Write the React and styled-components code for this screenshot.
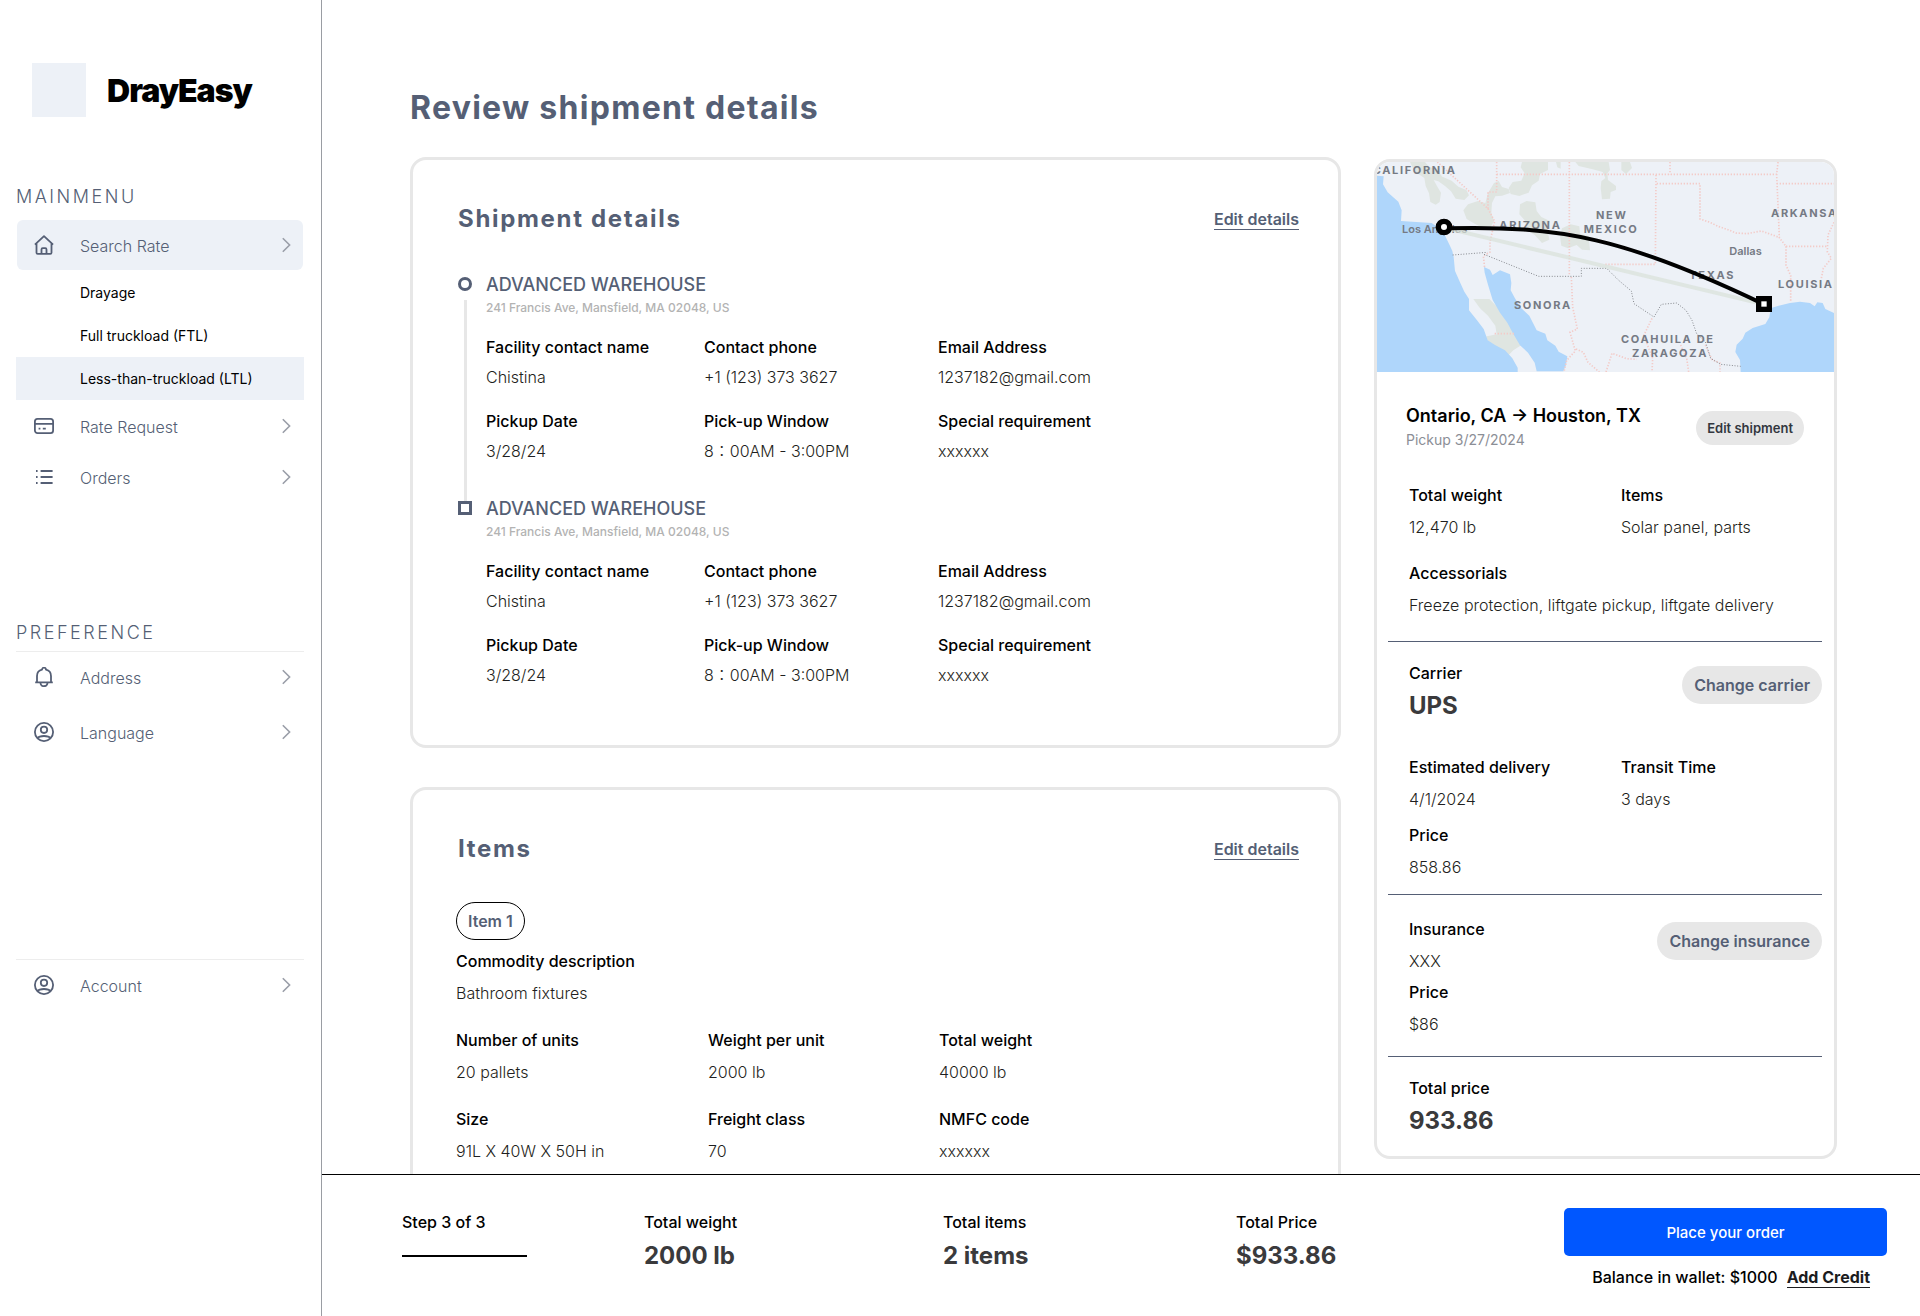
// Review shipment page

import React from 'react';
import styled, { createGlobalStyle } from 'styled-components';

const GlobalStyle = createGlobalStyle`
    *{
        box-sizing : border-box;
    }
    body{
        margin : 0;
        background : #ffffff;
        color : #000000;
        font-family : Inter, "Noto Sans CJK JP", sans-serif;
        font-size : 16px;
        line-height : 20px;
    }
    h1, h2, h3, p, dl, dd, ul{
        margin : 0;
        padding : 0;
    }
    button{
        font-family : inherit;
        border : none;
        padding : 0;
        cursor : pointer;
    }
`;

// page frame
const PageStyle = styled.div`
    display : grid;
    grid-template-columns : 322px minmax(0, 1fr);
    height : 100vh;
`;

// sidebar
const SidebarStyle = styled.nav`
    border-right : 1px solid #9a9da3;
    padding : 63px 17px 0 16px;
    overflow : hidden;
`;

const BrandStyle = styled.div`
    display : flex;
    align-items : center;
    gap : 21px;
    padding-left : 16px;
    margin-bottom : 68px;
`;

const LogoStyle = styled.div`
    width : 54px;
    height : 54px;
    background : #edf1f7;
`;

const BrandName = styled.span`
    font-size : 32px;
    font-weight : 900;
    line-height : 40px;
    letter-spacing : -1px;
    padding-top : 2px;
`;

const MenuTitle = styled.h2`
    font-size : 18px;
    font-weight : 300;
    line-height : 24px;
    letter-spacing : 0.14em;
    color : #555f75;
    margin-bottom : ${props => props.$gap}px;
`;

const MenuList = styled.ul`
    list-style : none;
    display : flex;
    flex-direction : column;
    gap : ${props => props.$gap}px;
    margin-bottom : ${props => props.$after}px;
    border-top : ${props => (props.$line ? '1px solid #ededed' : 'none')};
`;

const MenuLink = styled.a`
    display : grid;
    grid-template-columns : 20px 1fr 20px;
    align-items : center;
    column-gap : 26px;
    height : 50px;
    margin : 0 1px;
    padding : 0 7px 0 17px;
    border-radius : 6px;
    background : ${props => (props.$active ? '#edf1f7' : 'transparent')};
    color : #555f75;
    font-weight : 300;
    text-decoration : none;
    svg{
        display : block;
    }
    span{
        padding-top : 2px;
    }
`;

const SubLink = styled.a`
    display : flex;
    align-items : center;
    height : 43px;
    padding-left : 64px;
    font-size : 14px;
    color : #000000;
    background : ${props => (props.$active ? '#edf1f7' : 'transparent')};
    text-decoration : none;
`;

// main column
const MainStyle = styled.main`
    display : flex;
    flex-direction : column;
    min-height : 0;
`;

const ScrollArea = styled.div`
    flex : 1;
    min-height : 0;
    overflow-y : auto;
    scrollbar-width : none;
    padding : 88px 83px 39px 88px;
`;

const PageTitle = styled.h1`
    font-size : 32px;
    font-weight : 700;
    line-height : 40px;
    letter-spacing : 0.04em;
    color : #555f75;
    margin-bottom : 29px;
`;

const ColumnsStyle = styled.div`
    display : grid;
    grid-template-columns : 931fr 463fr;
    column-gap : 33px;
    align-items : start;
`;

const CardStack = styled.div`
    display : flex;
    flex-direction : column;
    gap : 39px;
`;

const CardStyle = styled.section`
    border : 3px solid #e7e7e7;
    border-radius : 16px;
    padding : 43px 39px 60px 43px;
`;

const CardHead = styled.div`
    display : flex;
    justify-content : space-between;
    align-items : center;
    padding-left : 2px;
    margin-bottom : 37px;
`;

const CardTitle = styled.h2`
    font-size : 24px;
    font-weight : 700;
    line-height : 32px;
    letter-spacing : 0.07em;
    color : #555f75;
`;

const TextLink = styled.a`
    font-weight : ${props => props.$weight};
    color : ${props => props.$color};
    text-decoration : none;
    border-bottom : 1px solid ${props => props.$color};
`;

// stops
const StopList = styled.div`
    padding : 2px 0 0 2px;
`;

const StopStyle = styled.div`
    display : grid;
    grid-template-columns : 14px 1fr;
    column-gap : 14px;
`;

const RailStyle = styled.div`
    display : flex;
    flex-direction : column;
    padding-top : 3px;
`;

const MarkerStyle = styled.span`
    width : 14px;
    height : 14px;
    flex : none;
    border : 3px solid #555f75;
    border-radius : ${props => (props.$round ? '50%' : '0')};
`;

const RailLine = styled.span`
    flex : 1;
    width : 3px;
    margin : 9px 0 -3px 6px;
    background : #e7e7e7;
`;

const StopBody = styled.div`
    padding-bottom : ${props => (props.$last ? 0 : 37)}px;
`;

const StopName = styled.h3`
    font-size : 18px;
    font-weight : 500;
    line-height : 22px;
    color : #555f75;
`;

const StopAddress = styled.p`
    font-size : 12px;
    font-weight : 500;
    line-height : 16px;
    color : #b3b3b3;
    margin : 4px 0 21px;
`;

// label and value pairs
const FieldGrid = styled.dl`
    display : grid;
    grid-template-columns : ${props => props.$columns};
    row-gap : ${props => props.$rowGap}px;
`;

const FieldStyle = styled.div`
    display : flex;
    flex-direction : column;
    gap : ${props => props.$gap}px;
    grid-column : ${props => (props.$wide ? '1 / -1' : 'auto')};
`;

const Label = styled.dt`
    font-weight : 500;
`;

const Value = styled.dd`
    color : #1f1f21;
    font-weight : 300;
`;

const BigValue = styled.dd`
    font-size : 24px;
    font-weight : 700;
    line-height : 28px;
    color : #3a3a3c;
`;

const ItemTag = styled.button`
    display : block;
    height : 38px;
    padding : 0 11px;
    border : 1px solid #000000;
    border-radius : 19px;
    background : #ffffff;
    color : #555f75;
    font-size : 16px;
    font-weight : 600;
    margin-bottom : 11px;
`;

// summary card
const SummaryStyle = styled.aside`
    margin-top : 2px;
    border : 3px solid #e7e7e7;
    border-radius : 16px;
    overflow : hidden;
`;

const MapStyle = styled.svg`
    display : block;
    width : 100%;
    height : 210px;
    font-weight : 600;
    font-size : 33px;
    fill : #757a84;
`;

const RouteHead = styled.div`
    display : flex;
    justify-content : space-between;
    align-items : center;
    padding : 33px 30px 35px 29px;
`;

const RouteTitle = styled.h2`
    font-size : 18px;
    font-weight : 600;
    line-height : 22px;
`;

const RouteDate = styled.p`
    font-size : 14px;
    color : #8b8e96;
    margin-top : 3px;
`;

const SummarySection = styled.div`
    margin : 0 12px 0 11px;
    padding : ${props => props.$pad} 0 ${props => props.$end} 21px;
    border-top : ${props => (props.$first ? 'none' : '1px solid #555f75')};
`;

const SectionHead = styled.div`
    display : flex;
    justify-content : space-between;
    align-items : flex-start;
    margin-bottom : ${props => props.$after}px;
`;

const PillButton = styled.button`
    height : ${props => (props.$small ? 34 : 38)}px;
    padding : 0 ${props => (props.$small ? 11 : 12)}px;
    margin-top : ${props => (props.$small ? 0 : 3)}px;
    border-radius : 19px;
    background : #e7e7e7;
    color : ${props => (props.$small ? '#33373f' : '#555f75')};
    font-size : ${props => (props.$small ? 13 : 16)}px;
    font-weight : 600;
`;

// bottom bar
const BottomBar = styled.footer`
    display : grid;
    grid-template-columns : 242fr 299fr 293fr 328fr 323fr;
    border-top : 1px solid #000000;
    padding : 33px 33px 28px 80px;
    background : #ffffff;
`;

const Metric = styled.dl`
    display : flex;
    flex-direction : column;
    gap : 10px;
    padding-top : 4px;
`;

const StepStyle = styled.div`
    padding-top : 4px;
    font-weight : 500;
`;

const StepBar = styled.div`
    width : 125px;
    height : 2px;
    margin-top : 23px;
    background : #000000;
`;

const OrderButton = styled.button`
    width : 100%;
    height : 48px;
    border-radius : 5px;
    background : #0057ff;
    color : #ffffff;
    font-size : 15px;
    font-weight : 500;
`;

const BalanceRow = styled.div`
    display : flex;
    justify-content : flex-end;
    gap : 9px;
    margin-top : 11px;
    padding-right : 17px;
    font-weight : 500;
`;

const icons = {
    home: (
        <>
            <path d="M0.9 9.6 10 1.2l9.1 8.4" />
            <path d="M2.5 8.4v9.3a1.2 1.2 0 0 0 1.2 1.2h12.6a1.2 1.2 0 0 0 1.2-1.2V8.4" />
            <path d="M7.5 18.8v-4.4a1.2 1.2 0 0 1 1.2-1.2h2.6a1.2 1.2 0 0 1 1.2 1.2v4.4" />
        </>
    ),
    card: (
        <>
            <rect x="0.9" y="2.9" width="18.2" height="14.2" rx="2.6" />
            <path d="M0.9 7.8h18.2M4.6 12.6h1.8M8.8 12.6h3" />
        </>
    ),
    list: <path d="M2 4h1.6M2 10h1.6M2 16h1.6M6.6 4h12M6.6 10h12M6.6 16h12" />,
    bell: (
        <>
            <path d="M1.2 15.4h17.6M3 15.2V9c0-3 2-5.6 5-6.3a2 2 0 0 1 4 0c3 .7 5 3.3 5 6.3v6.2" />
            <path d="M6.5 16a3.5 3.2 0 0 0 7 0" />
        </>
    ),
    user: (
        <>
            <circle cx="10" cy="10" r="9.1" />
            <circle cx="10" cy="7.8" r="3.2" />
            <path d="M3.4 16.2c1.2-1.6 3.6-2.2 6.6-2.2s5.4 .6 6.6 2.2" />
        </>
    )
};

function Icon({ name }) {
    return (
        <svg width="20" height="20" viewBox="0 0 20 20" fill="none" stroke="#555f75" strokeWidth="1.8" strokeLinejoin="round" aria-hidden="true">
            {icons[name]}
        </svg>
    );
}

function Chevron() {
    return (
        <svg width="20" height="20" viewBox="0 0 20 20" fill="none" stroke="#9a9ea8" strokeWidth="1.6" aria-hidden="true">
            <path d="M6.8 3.2 13.6 10l-6.8 6.8" />
        </svg>
    );
}

function MenuItem({ icon, text, active }) {
    return (
        <li>
            <MenuLink href="#" $active={active}>
                <Icon name={icon} />
                <span>{text}</span>
                <Chevron />
            </MenuLink>
        </li>
    );
}

function Sidebar() {
    return (
        <SidebarStyle>
            <BrandStyle>
                <LogoStyle />
                <BrandName>DrayEasy</BrandName>
            </BrandStyle>
            <MenuTitle $gap={11}>MAINMENU</MenuTitle>
            <MenuList $gap={1} $after={119}>
                <MenuItem icon="home" text="Search Rate" active />
                <li>
                    <SubLink href="#">Drayage</SubLink>
                    <SubLink href="#">Full truckload (FTL)</SubLink>
                    <SubLink href="#" $active>Less-than-truckload (LTL)</SubLink>
                </li>
                <MenuItem icon="card" text="Rate Request" />
                <MenuItem icon="list" text="Orders" />
            </MenuList>
            <MenuTitle $gap={6}>PREFERENCE</MenuTitle>
            <MenuList $gap={5} $after={202} $line>
                <MenuItem icon="bell" text="Address" />
                <MenuItem icon="user" text="Language" />
            </MenuList>
            <MenuList $gap={5} $after={0} $line>
                <MenuItem icon="user" text="Account" />
            </MenuList>
        </SidebarStyle>
    );
}

function Field({ label, value, gap = 12, wide }) {
    return (
        <FieldStyle $gap={gap} $wide={wide}>
            <Label>{label}</Label>
            <Value>{value}</Value>
        </FieldStyle>
    );
}

function Total({ label, value }) {
    return (
        <FieldStyle as="dl" $gap={9}>
            <Label>{label}</Label>
            <BigValue>{value}</BigValue>
        </FieldStyle>
    );
}

const stopFields = [
    { label: 'Facility contact name', value: 'Chistina' },
    { label: 'Contact phone', value: '+1 (123) 373 3627' },
    { label: 'Email Address', value: '1237182@gmail.com' },
    { label: 'Pickup Date', value: '3/28/24' },
    { label: 'Pick-up Window', value: '8：00AM - 3:00PM' },
    { label: 'Special requirement', value: 'xxxxxx' }
];

const itemFields = [
    { label: 'Commodity description', value: 'Bathroom fixtures', wide: true },
    { label: 'Number of units', value: '20 pallets' },
    { label: 'Weight per unit', value: '2000 lb' },
    { label: 'Total weight', value: '40000 lb' },
    { label: 'Size', value: '91L X 40W X 50H in' },
    { label: 'Freight class', value: '70' },
    { label: 'NMFC code', value: 'xxxxxx' }
];

function Stop({ last }) {
    return (
        <StopStyle>
            <RailStyle>
                <MarkerStyle $round={!last} />
                {!last && <RailLine />}
            </RailStyle>
            <StopBody $last={last}>
                <StopName>ADVANCED WAREHOUSE</StopName>
                <StopAddress>241 Francis Ave, Mansfield, MA 02048, US</StopAddress>
                <FieldGrid $columns="218fr 234fr 361fr" $rowGap={24}>
                    {stopFields.map(field => (
                        <Field key={field.label} gap={10} {...field} />
                    ))}
                </FieldGrid>
            </StopBody>
        </StopStyle>
    );
}

function Card({ title, children }) {
    return (
        <CardStyle>
            <CardHead>
                <CardTitle>{title}</CardTitle>
                <TextLink href="#" $color="#555f75" $weight={600}>Edit details</TextLink>
            </CardHead>
            {children}
        </CardStyle>
    );
}

// route map, Los Angeles to Houston
function RouteMap() {
    return (
        <MapStyle viewBox="51 51 1371 630" preserveAspectRatio="xMidYMid slice" role="img" aria-label="Route map">
            <rect x="0" y="0" width="1480" height="720" fill="#edf1f7" />
            {/* parks */}
            <g fill="#dfe5e1">
                <path d="M150 51h45l12 14 22 8 18 22 28 12 20 18 24 10 8 16-14 14-26-4-14-22-18-16-20-14-14-4 12 22 10 16-4 28-12 8-16-8-4-26-10-22-4-24-30-20z" />
                <path d="M310 196l14-18 30-10 22 6 8-30 18-30 14-6 10 18 20 6 4 12-24 8-20 2-10 20-2 30 8 24-10 18-24 2-24-12-24-14z" />
                <path d="M486 51h78v24l-24 12-4 20-20 14-10 22-28 10-26-6-6-18 12-18 26-4 10-22-12-18z" />
                <path d="M588 51h14v20l-10-4z" />
                <path d="M480 178l20-10 26 4 4 26 14 18 26 12-8 24 6 32-22 10-22-24-22-14-8-30-16-18z" />
                <path d="M606 250l26-12 26 6 2 22 26 8 4 42-24-2-16-14-26 10-20-8-4-28z" />
                <path d="M646 51h100l4 24-8 10 2 20 24 18 0 12-16 6-2 20-24 2-4-34 2-20 12-10-8-18-30-8-42-10z" />
                <path d="M784 51h26l6 18-18 18-14-12z" />
                <path d="M340 462h48l26 26 26 16 10 30 14 10 6 26 18 28-28 18-14 14-30-10-16-18-30-26 40-8-4-26-22-30-24-22z" />
            </g>
            {/* water */}
            <g fill="#afd6fb">
                <path d="M51 92l20 2-2 24 14 24 32 28 10 26-2 32 34 2 58 4 22 16 16 18 14 28 10 22 4 18 4 42 16 36 12 26 14 22 0 34 24 30 20 26 12 34 22 14 30 16 22 24 16 28v21H51z" />
                <path d="M372 366l18 8 8 16 22-14 30 12 4 26-2 22 12 22 18 30 26 24 22 44 26 10 6 20 24 16 10 18 26 14-4 26-8 19H530l-6-26-20-30-24-22-20-34-18-34-22-30-22-38-14-46-10-36z" />
                <path d="M1236 488l20-6 34-8 30-4 30 4 14 10 8-12 16 2 8 18 26 12v177h-280l-2-36-14-24 4-22 18-18 8-18 22-14 38-12 12-20 2-14z" />
            </g>
            {/* state borders */}
            <g fill="none" stroke="#f3cbc8" strokeWidth="5" strokeDasharray="4 5">
                <path d="M410 51v90h-26v50L232 51M384 191l20 38-14 62v30l-20 12 4 38" />
                <path d="M410 88h844M930 51v37M1254 51l-4 37 8 190 20 26M1250 116h172" />
                <path d="M628 51v340M888 90l-2 268H732M890 116h130v106l30 10 24 12 30 10 24 10 34 2 42-8 56 20" />
                <path d="M1278 304h122M1278 304l0 56 14 32v80M1422 232l-18 38-2 50 12 20-24 30-6 30" />
                <path d="M634 396l4 90 14 66-22 10 16 56-26 28-8 34M648 612l22 10 14 30 34 29" />
                <path d="M876 520l-24 50 14 40 12 30-2 41M738 681l18-56 44 16 30 2M962 600l18 40 6 41M1036 600l20 44 24 10v27M404 566h60" />
            </g>
            {/* national border */}
            <path d="M278 330l104-8M372 328l164 66h128v-24h76l36 36 38 32 8 38 60 40 22-38 46-4 28 22 18 30 14 40 26 24 16 50 30 18 60 6" fill="none" stroke="#85888d" strokeWidth="3" strokeDasharray="3 5" />
            <g letterSpacing="5" fontWeight="700">
                <text x="38" y="88">CALIFORNIA</text>
                <text x="418" y="251">ARIZONA</text>
                <text x="708" y="222">NEW</text>
                <text x="671" y="265">MEXICO</text>
                <text x="1233" y="217">ARKANSAS</text>
                <text x="988" y="401">TEXAS</text>
                <text x="1254" y="429">LOUISIANA</text>
                <text x="462" y="492">SONORA</text>
                <text x="783" y="593">COAHUILA DE</text>
                <text x="816" y="636">ZARAGOZA</text>
            </g>
            <text x="126" y="263">Los Angeles</text>
            <text x="1108" y="331">Dallas</text>
            <path d="M252 248L1212 478" stroke="#d9e1d9" strokeWidth="12" strokeOpacity="0.7" />
            <path d="M252 250C600 240 800 280 1212 478" fill="none" stroke="#000000" strokeWidth="12" />
            <circle cx="252" cy="246" r="17" fill="#ffffff" stroke="#000000" strokeWidth="16" />
            <rect x="1196" y="461" width="32" height="32" fill="#ffffff" stroke="#000000" strokeWidth="16" />
        </MapStyle>
    );
}

function Summary() {
    return (
        <SummaryStyle>
            <RouteMap />
            <RouteHead>
                <div>
                    <RouteTitle>Ontario, CA → Houston, TX</RouteTitle>
                    <RouteDate>Pickup 3/27/2024</RouteDate>
                </div>
                <PillButton $small>Edit shipment</PillButton>
            </RouteHead>
            <SummarySection $first $pad="0" $end="26px">
                <FieldGrid $columns="212fr 201fr" $rowGap={26}>
                    <Field label="Total weight" value="12,470 lb" />
                    <Field label="Items" value="Solar panel, parts" />
                    <Field label="Accessorials" value="Freeze protection, liftgate pickup, liftgate delivery" wide />
                </FieldGrid>
            </SummarySection>
            <SummarySection $pad="21px" $end="17px">
                <SectionHead $after={37}>
                    <Total label="Carrier" value="UPS" />
                    <PillButton>Change carrier</PillButton>
                </SectionHead>
                <FieldGrid $columns="212fr 201fr" $rowGap={16}>
                    <Field label="Estimated delivery" value="4/1/2024" />
                    <Field label="Transit Time" value="3 days" />
                    <Field label="Price" value="858.86" />
                </FieldGrid>
            </SummarySection>
            <SummarySection $pad="24px" $end="22px">
                <SectionHead $after={0}>
                    <FieldGrid $columns="1fr" $rowGap={11}>
                        <Field label="Insurance" value="XXX" />
                        <Field label="Price" value="$86" />
                    </FieldGrid>
                    <PillButton>Change insurance</PillButton>
                </SectionHead>
            </SummarySection>
            <SummarySection $pad="21px" $end="21px">
                <Total label="Total price" value="933.86" />
            </SummarySection>
        </SummaryStyle>
    );
}

const metrics = [
    { label: 'Total weight', value: '2000 lb' },
    { label: 'Total items', value: '2 items' },
    { label: 'Total Price', value: '$933.86' }
];

function Footer() {
    return (
        <BottomBar>
            <StepStyle>
                Step 3 of 3
                <StepBar />
            </StepStyle>
            {metrics.map(metric => (
                <Metric key={metric.label}>
                    <Label>{metric.label}</Label>
                    <BigValue>{metric.value}</BigValue>
                </Metric>
            ))}
            <div>
                <OrderButton>Place your order</OrderButton>
                <BalanceRow>
                    <span>Balance in wallet: $1000</span>
                    <TextLink href="#" $color="#1c1c1e" $weight={700}>Add Credit</TextLink>
                </BalanceRow>
            </div>
        </BottomBar>
    );
}

function App() {
    return (
        <>
            <GlobalStyle />
            <PageStyle>
                <Sidebar />
                <MainStyle>
                    <ScrollArea>
                        <PageTitle>Review shipment details</PageTitle>
                        <ColumnsStyle>
                            <CardStack>
                                <Card title="Shipment details">
                                    <StopList>
                                        <Stop />
                                        <Stop last />
                                    </StopList>
                                </Card>
                                <Card title="Items">
                                    <ItemTag>Item 1</ItemTag>
                                    <FieldGrid $columns="252fr 231fr 360fr" $rowGap={27}>
                                        {itemFields.map(field => (
                                            <Field key={field.label} {...field} />
                                        ))}
                                    </FieldGrid>
                                </Card>
                            </CardStack>
                            <Summary />
                        </ColumnsStyle>
                    </ScrollArea>
                    <Footer />
                </MainStyle>
            </PageStyle>
        </>
    );
}

export default App;
